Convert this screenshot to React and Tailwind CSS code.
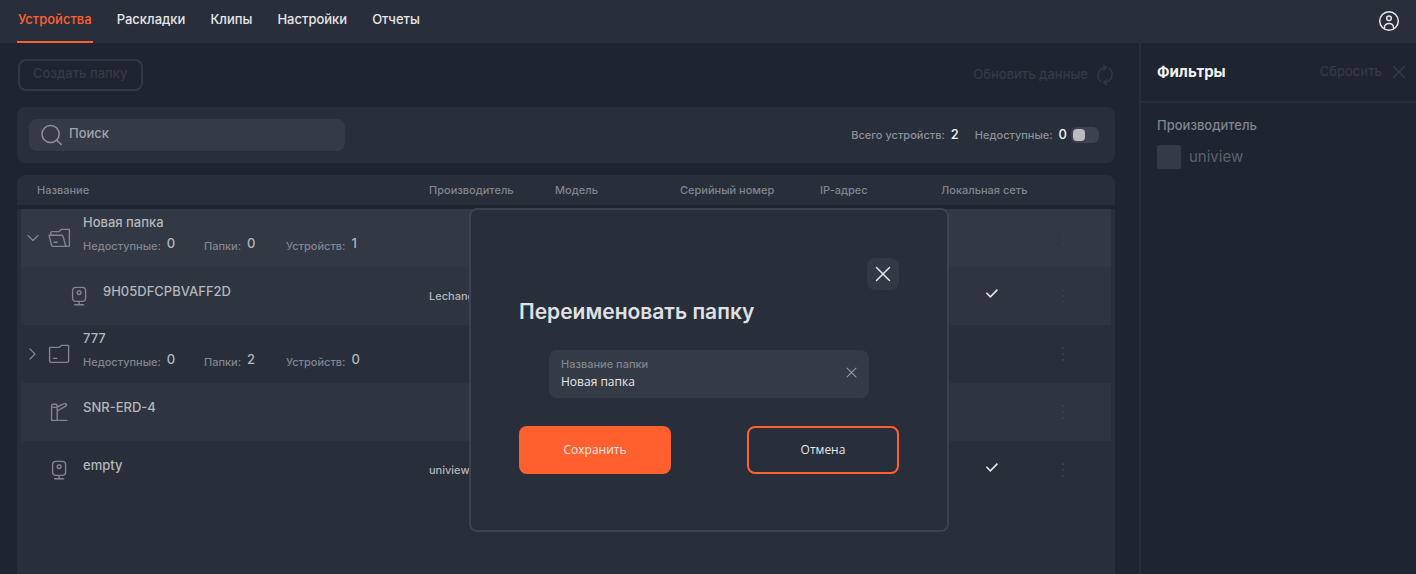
import { useState } from 'react';
import clsx from 'clsx';

const tabs = ['Устройства', 'Раскладки', 'Клипы', 'Настройки', 'Отчеты'];

const rows = [
  { id: 1, kind: 'folder', open: true, name: 'Новая папка', stats: [0, 0, 1] },
  { id: 2, kind: 'camera', child: true, name: '9H05DFCPBVAFF2D', vendor: 'Lechange', local: true },
  { id: 3, kind: 'folder', open: false, name: '777', stats: [0, 2, 0] },
  { id: 4, kind: 'barrier', name: 'SNR-ERD-4' },
  { id: 5, kind: 'camera', name: 'empty', vendor: 'uniview', local: true },
];

const rowColors = {
  1: 'bg-[#323844]',
  2: 'bg-[#2e3440]',
  3: 'bg-[#282e3a]',
  4: 'bg-[#2e3440]',
  5: 'bg-[#282e3a]',
};

const CrossIcon = ({ className, strokeWidth = 1.5 }) => (
  <svg viewBox="0 0 16 16" className={className} fill="none" stroke="currentColor" strokeWidth={strokeWidth} strokeLinecap="round">
    <path d="M1.5 1.5l13 13M14.5 1.5l-13 13" />
  </svg>
);

const UserIcon = () => (
  <svg viewBox="0 0 22 22" className="size-[22px]" fill="none" stroke="currentColor" strokeWidth="1.5">
    <circle cx="11" cy="11" r="9.3" />
    <circle cx="11" cy="8.2" r="2.3" />
    <path d="M6.4 18.8v-1.1a4.6 4.3 0 0 1 9.2 0v1.1" />
  </svg>
);

const RefreshIcon = () => (
  <svg viewBox="0 0 18 22" className="h-[22px] w-[18px]" fill="none" stroke="currentColor" strokeWidth="1.4" strokeLinecap="round" strokeLinejoin="round">
    <path d="M4.6 17.6A7.6 8 0 0 1 8.6 3.6M13.4 4.4a7.6 8 0 0 1-4 14" />
    <path d="M7.6 1.2l2.6 2.4-2.6 2.4M10.4 16l-2.6 2.4 2.6 2.4" />
  </svg>
);

const SearchIcon = () => (
  <svg viewBox="0 0 22 22" className="size-[22px]" fill="none" stroke="currentColor" strokeWidth="1.5" strokeLinecap="round">
    <circle cx="9.6" cy="10" r="8.6" />
    <path d="M15.6 16l4.4 4.4" />
  </svg>
);

const Chevron = ({ open }) => (
  <svg viewBox="0 0 16 16" className="size-4" fill="none" stroke="currentColor" strokeWidth="1.2" strokeLinecap="round" strokeLinejoin="round">
    <path d={open ? 'M3 5.5l5 5 5-5' : 'M5 3l5 5-5 5'} />
  </svg>
);

const KindIcon = ({ kind, open }) => (
  <svg viewBox="0 0 24 24" className="size-6" fill="none" stroke="currentColor" strokeWidth="1.4" strokeLinecap="round" strokeLinejoin="round">
    {kind === 'folder' && open && (
      <>
        <path d="M3.8 8.8V6.8Q3.8 5.6 5 5.6H12l2.4-2.2H22.4v15.8q0 1.2-1.2 1.2H6.2q-1.4 0-1.7-1.4L2 9.2h12.6q1.2 0 1.5 1.2l2.2 8.4q.4 1.6 2 1.6" />
        <path d="M7 16.2h3.2" />
      </>
    )}
    {kind === 'folder' && !open && (
      <>
        <path d="M2.6 5.4h9.6l2.2-2h7.2v15.2q0 1.8-1.8 1.8H4.4q-1.8 0-1.8-1.8z" />
        <path d="M6.4 16.4h3.2" />
      </>
    )}
    {kind === 'camera' && (
      <>
        <rect x="5.6" y="3.4" width="13" height="14" rx="3.4" />
        <circle cx="12.1" cy="8.6" r="1.9" />
        <path d="M12.1 17.4v3M7.6 20.7h9" />
      </>
    )}
    {kind === 'barrier' && (
      <path d="M4.6 20.4V6.2q0-2 2-2h1.6q2 0 2 2v14.2M4.6 7.4h5.6M4.6 20.4H20M10.2 7l6.6-3.2q2-.8 2.6.4.6 1.4-1.2 2.2L10.2 11" />
    )}
  </svg>
);

const Stat = ({ label, value, className }) => (
  <span className={clsx('flex items-center gap-1.5 font-medium', className)}>
    <span className="text-[11px] text-[#81858d]">{label}:</span>
    <span className="pb-1 text-[13px] text-[#b4b6ba]">{value}</span>
  </span>
);

const DeviceRow = ({ row }) => (
  <tr className={rowColors[row.id]}>
    <td className="h-[58px] border-l-4 border-[#282e3a] p-0">
      <div className={clsx('flex items-center gap-3', row.child ? 'pl-6' : 'pl-1')}>
        <div className="flex items-center gap-1.5 text-[#81858d]">
          {row.kind === 'folder' ? (
            <button type="button" aria-label={row.open ? 'Свернуть' : 'Развернуть'} className="size-4">
              <Chevron open={row.open} />
            </button>
          ) : (
            <span className="size-4" />
          )}
          <KindIcon kind={row.kind} open={row.open} />
        </div>
        {row.stats ? (
          <div className="pb-2">
            <div className="text-[13px] leading-6 font-medium text-[#b4b6ba]">{row.name}</div>
            <div className="flex h-6 items-center">
              <Stat label="Недоступные" value={row.stats[0]} className="w-[121px]" />
              <Stat label="Папки" value={row.stats[1]} className="w-[82px]" />
              <Stat label="Устройств" value={row.stats[2]} />
            </div>
          </div>
        ) : (
          <div className="pb-2.5 text-[13px] leading-5 font-medium text-[#b4b6ba]">{row.name}</div>
        )}
      </div>
    </td>
    <td className="p-0 text-[11px] font-medium text-[#b4b6ba]">{row.vendor}</td>
    <td />
    <td />
    <td />
    <td className="p-0 pb-1.5">
      {row.local && (
        <svg viewBox="0 0 14 14" className="mx-auto size-3.5" fill="none" stroke="#e6e7e8" strokeWidth="1.6" role="img" aria-label="Да">
          <path d="M1.4 6.8l4 4 7-7.2" />
        </svg>
      )}
    </td>
    <td className="border-r-4 border-[#282e3a] p-0">
      <button type="button" aria-label="Действия" className="flex w-10 justify-center text-[#383e4a]">
        <svg viewBox="0 0 4 16" className="h-4 w-1" fill="currentColor">
          <circle cx="2" cy="2" r="1.2" />
          <circle cx="2" cy="8" r="1.2" />
          <circle cx="2" cy="14" r="1.2" />
        </svg>
      </button>
    </td>
  </tr>
);

const RenameDialog = () => {
  const [name, setName] = useState('Новая папка');

  return (
    <div className="absolute inset-0 flex items-start justify-center pt-[208px] pl-0.5">
      <div role="dialog" aria-labelledby="rename-title" className="flex w-[480px] flex-col rounded-lg border-2 border-[#3c424f] bg-[#282e3a] px-12 pt-12 pb-14">
        <button type="button" aria-label="Закрыть" className="flex size-8 items-center justify-center self-end rounded-lg bg-[#323844] text-[#e6e7e8]">
          <CrossIcon className="size-4" />
        </button>
        <h2 id="rename-title" className="text-[21px] leading-11 font-semibold text-[#dfe0e2]">Переименовать папку</h2>
        <div className="mx-auto mt-4 flex h-12 w-80 items-center rounded-lg bg-[#343a46] px-3 pb-1">
          <div className="flex flex-1 flex-col">
            <label htmlFor="folder-name" className="text-[11px] leading-5 font-medium text-[#81858d]">Название папки</label>
            <input
              id="folder-name"
              value={name}
              onChange={(e) => setName(e.target.value)}
              className="w-full font-['Open_Sans',sans-serif] text-[12px] leading-4 text-[#e6e7e8] outline-none"
            />
          </div>
          <button type="button" aria-label="Очистить" onClick={() => setName('')} className="text-[#9a9da4]">
            <CrossIcon className="size-[11px]" />
          </button>
        </div>
        <div className="mt-7 flex justify-between font-['Open_Sans',sans-serif] text-[12px] text-[#e6e7e8]">
          <button type="button" className="h-12 w-[152px] rounded-lg bg-[#ff602e]">Сохранить</button>
          <button type="button" className="h-12 w-[152px] rounded-lg border-2 border-[#ff602e]">Отмена</button>
        </div>
      </div>
    </div>
  );
};

const Filters = () => (
  <aside className="w-[277px] shrink-0 border-l-2 border-[#282e3a]">
    <div className="flex h-[60px] items-center justify-between border-b-2 border-[#282e3a] pr-2.5 pl-4">
      <h2 className="text-[15px] font-bold text-[#f2f2f3]">Фильтры</h2>
      <button type="button" className="flex items-center gap-2.5 text-[13px] font-medium text-[#343a46]">
        Сбросить
        <CrossIcon className="size-3.5" />
      </button>
    </div>
    <fieldset className="px-4 pt-2.5">
      <legend className="float-left w-full text-[13px] leading-6 font-medium text-[#81858d]">Производитель</legend>
      <label className="clear-both flex items-center gap-2 pt-2 text-[15px] leading-6 text-[#5c616b]">
        <input type="checkbox" className="size-6 appearance-none rounded-xs bg-[#343a46] checked:bg-[#ff602e]" />
        uniview
      </label>
    </fieldset>
  </aside>
);

const App = () => {
  const [active, setActive] = useState('Устройства');

  return (
    <div className="relative flex min-h-screen flex-col bg-[#1e2430] font-['Inter',sans-serif]">
      <header className="flex h-[43px] items-stretch justify-between bg-[#282e3a] pr-4 pl-[17px]">
        <nav className="flex gap-[23px]">
          {tabs.map((tab) => (
            <a
              key={tab}
              href="#"
              onClick={() => setActive(tab)}
              className={clsx(
                'border-b-2 px-px pt-[7px] text-[13px] leading-6 font-medium',
                tab === active ? 'border-[#ff602e] text-[#ff602e]' : 'border-transparent text-[#e6e7e8]'
              )}
            >
              {tab}
            </a>
          ))}
        </nav>
        <button type="button" aria-label="Профиль" className="pb-px text-[#e6e7e8]">
          <UserIcon />
        </button>
      </header>

      <div className="flex flex-1">
        <main className="flex min-w-0 flex-1 flex-col pr-6 pl-[17px]">
          <div className="flex h-16 items-center justify-between px-px">
            <button type="button" className="h-8 rounded-lg border-2 border-[#323844] px-[13px] pb-0.5 text-[13px] font-medium text-[#343a46]">
              Создать папку
            </button>
            <button type="button" className="flex items-center gap-2 text-[13px] font-medium text-[#343a46]">
              Обновить данные
              <RefreshIcon />
            </button>
          </div>

          <div className="flex h-14 items-center justify-between rounded-lg bg-[#282e3a] pr-4 pl-3">
            <label className="flex h-8 w-[316px] items-center gap-1.5 rounded-lg bg-[#343a46] px-3 text-[#8d9097]">
              <SearchIcon />
              <input
                type="search"
                placeholder="Поиск"
                aria-label="Поиск"
                className="min-w-0 flex-1 pb-0.5 text-[13px] font-medium text-[#e6e7e8] outline-none placeholder:text-[#a0a3a8]"
              />
            </label>
            <div className="flex items-center gap-4 text-[11px] font-medium text-[#8d9097]">
              <span className="flex items-center gap-1.5">
                Всего устройств: <span className="text-[13px] text-[#f2f2f3]">2</span>
              </span>
              <label className="flex items-center gap-1">
                <span className="flex items-center gap-1.5">
                  Недоступные: <span className="text-[13px] text-[#f2f2f3]">0</span>
                </span>
                <input
                  type="checkbox"
                  role="switch"
                  className="flex h-4 w-7 appearance-none items-center rounded-md bg-[#3c424f] px-0.5 before:size-3 before:rounded-sm before:bg-[#b9bbbf] checked:justify-end"
                />
              </label>
            </div>
          </div>

          <div className="mt-3 flex-1 rounded-t-lg bg-[#282e3a]">
            <table className="w-full table-fixed border-separate border-spacing-0 text-left">
              <colgroup>
                <col />
                <col className="w-[126px]" />
                <col className="w-[125px]" />
                <col className="w-[140px]" />
                <col className="w-[121px]" />
                <col className="w-[102px]" />
                <col className="w-[72px]" />
              </colgroup>
              <thead>
                <tr className="text-[11px] whitespace-nowrap text-[#81858d] *:h-[34px] *:border-b-4 *:border-[#1e2430] *:p-0 *:font-medium">
                  <th><span className="pl-5">Название</span></th>
                  <th>Производитель</th>
                  <th>Модель</th>
                  <th>Серийный номер</th>
                  <th>IP-адрес</th>
                  <th>Локальная сеть</th>
                  <th />
                </tr>
              </thead>
              <tbody>
                {rows.map((row) => (
                  <DeviceRow key={row.id} row={row} />
                ))}
              </tbody>
            </table>
          </div>
        </main>
        <Filters />
      </div>

      <RenameDialog />
    </div>
  );
};

export default App;
